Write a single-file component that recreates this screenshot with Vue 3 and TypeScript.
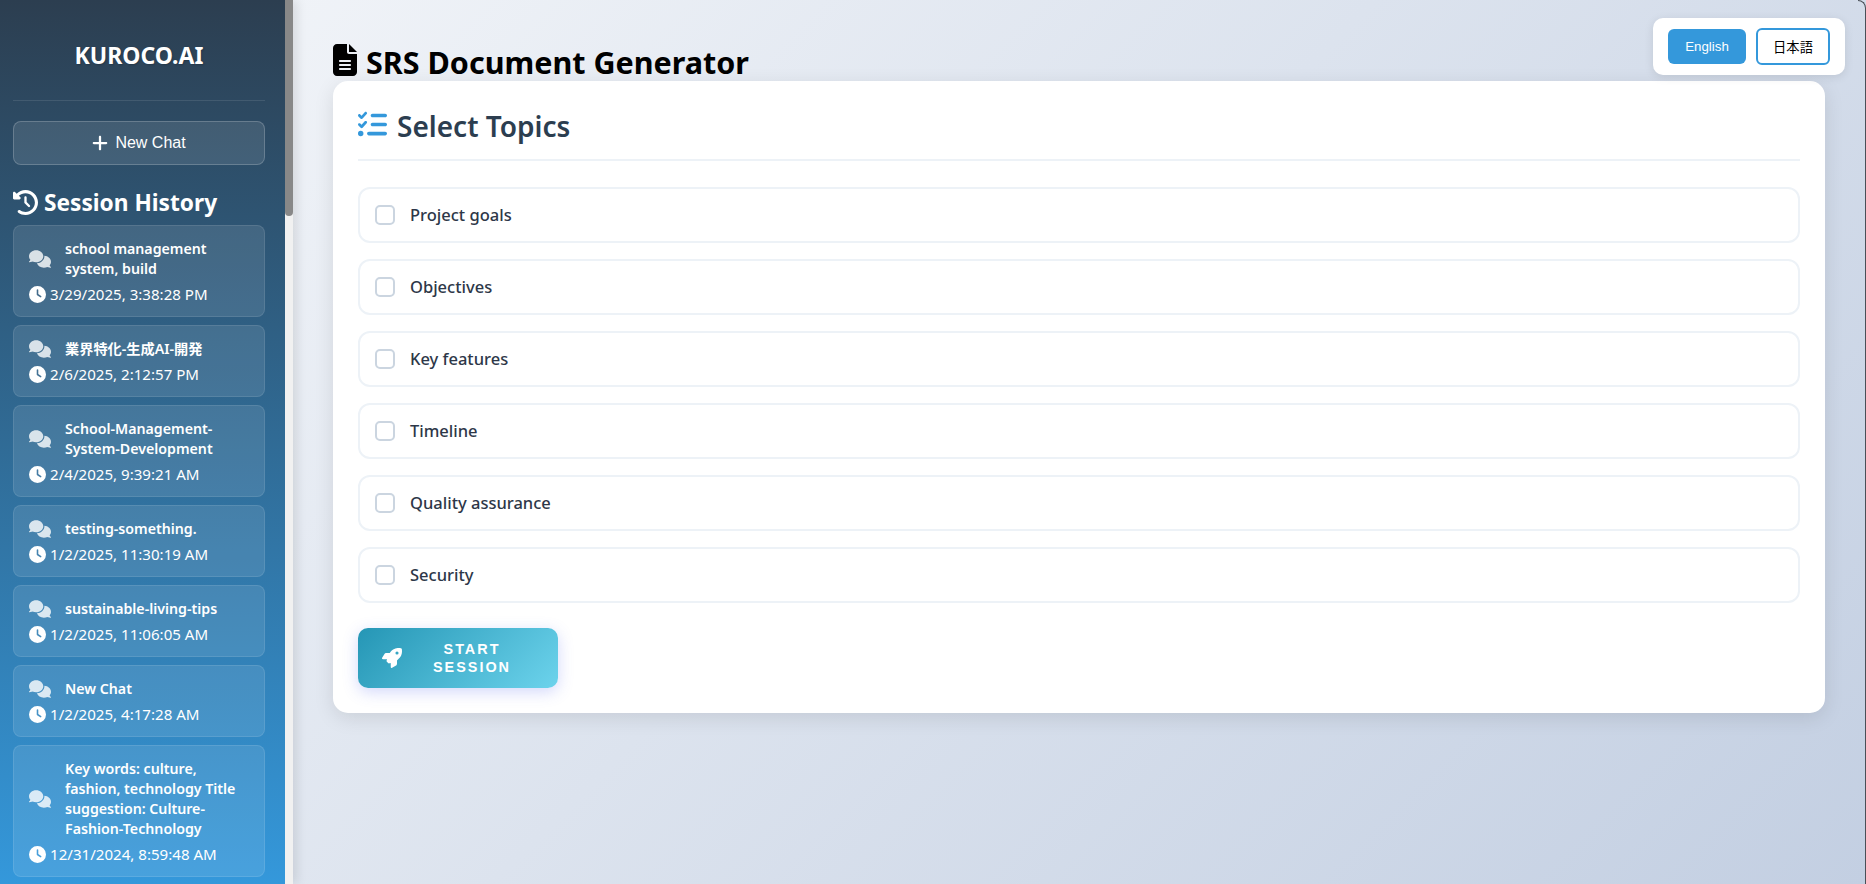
<script setup lang="ts">
interface Session { title: string; date: string }
const sessions: Session[] = [
  { title: 'school management system, build', date: '3/29/2025, 3:38:28 PM' },
  { title: '業界特化-生成AI-開発', date: '2/6/2025, 2:12:57 PM' },
  { title: 'School-Management-System-Development', date: '2/4/2025, 9:39:21 AM' },
  { title: 'testing-something.', date: '1/2/2025, 11:30:19 AM' },
  { title: 'sustainable-living-tips', date: '1/2/2025, 11:06:05 AM' },
  { title: 'New Chat', date: '1/2/2025, 4:17:28 AM' },
  { title: 'Key words: culture, fashion, technology Title suggestion: Culture-Fashion-Technology', date: '12/31/2024, 8:59:48 AM' },
]
const topics = ['Project goals', 'Objectives', 'Key features', 'Timeline', 'Quality assurance', 'Security']
const comments = 'M208 352c114.9 0 208-78.8 208-176S322.9 0 208 0S0 78.8 0 176c0 38.6 14.7 74.3 39.6 103.4c-3.5 9.4-8.7 17.7-14.2 24.7c-4.8 6.2-9.7 11-13.3 14.3c-1.8 1.6-3.3 2.9-4.3 3.7c-.5 .4-.9 .7-1.1 .8l-.2 .2 0 0 0 0C1 327.2-1.4 334.4 .8 340.9S9.1 352 16 352c21.8 0 43.8-5.6 62.1-12.5c9.2-3.5 17.8-7.4 25.3-11.4C134.1 343.3 169.8 352 208 352zM448 176c0 112.3-99.1 196.9-216.5 207C255.8 457.4 336.4 512 432 512c38.2 0 73.9-8.7 104.7-23.9c7.5 4 16 7.9 25.2 11.4c18.3 6.9 40.3 12.5 62.1 12.5c6.9 0 13.1-4.5 15.2-11.1c2.1-6.6-.2-13.8-5.8-17.9l0 0 0 0-.2-.2c-.2-.2-.6-.4-1.1-.8c-1-.8-2.5-2-4.3-3.7c-3.6-3.3-8.5-8.1-13.3-14.3c-5.5-7-10.7-15.4-14.2-24.7c24.9-29 39.6-64.7 39.6-103.4c0-92.8-84.9-168.9-192.6-175.5c.4 5.1 .6 10.3 .6 15.5z'
const clock = 'M256 0a256 256 0 1 1 0 512A256 256 0 1 1 256 0zM232 120V256c0 8 4 15.5 10.7 20l96 64c11 7.4 25.9 4.4 33.3-6.7s4.4-25.9-6.7-33.3L280 243.2V120c0-13.3-10.7-24-24-24s-24 10.7-24 24z'
</script>

<template>
  <div class="app">
    <aside class="sidebar">
      <div class="side-scroll">
        <h1 class="brand">KUROCO.AI</h1>
        <button class="new-chat">
          <svg class="plus" viewBox="0 0 448 512"><path fill="currentColor" d="M256 80c0-17.7-14.3-32-32-32s-32 14.3-32 32V224H48c-17.7 0-32 14.3-32 32s14.3 32 32 32H192V432c0 17.7 14.3 32 32 32s32-14.3 32-32V288H400c17.7 0 32-14.3 32-32s-14.3-32-32-32H256V80z"/></svg>
          New Chat
        </button>
        <h2 class="history">
          <svg class="history-icon" viewBox="0 0 512 512"><path fill="currentColor" d="M75 75L41 41C25.9 25.9 0 36.6 0 57.9V168c0 13.3 10.7 24 24 24H134.1c21.4 0 32.1-25.9 17-41l-30.8-30.8C155 85.5 203 64 256 64c106 0 192 86 192 192s-86 192-192 192c-40.8 0-78.6-12.7-109.7-34.4c-14.5-10.1-34.4-6.6-44.6 7.9s-6.6 34.4 7.9 44.6C151.2 495 201.7 512 256 512c141.4 0 256-114.6 256-256S397.4 0 256 0C185.3 0 121.3 28.7 75 75zm181 53c-13.3 0-24 10.7-24 24V256c0 6.4 2.5 12.5 7 17l72 72c9.4 9.4 24.6 9.4 33.9 0s9.4-24.6 0-33.9l-65-65V152c0-13.3-10.7-24-24-24z"/></svg>
          Session History
        </h2>
        <div class="session-list">
          <div v-for="s in sessions" :key="s.date" class="session">
            <div class="session-top">
              <svg class="comments" viewBox="0 0 640 512"><path fill="currentColor" :d="comments"/></svg>
              <span class="session-title">{{ s.title }}</span>
            </div>
            <div class="session-date">
              <svg class="clock" viewBox="0 0 512 512"><path fill="currentColor" :d="clock"/></svg>
              <span>{{ s.date }}</span>
            </div>
          </div>
        </div>
      </div>
      <div class="track"><div class="thumb"></div></div>
    </aside>

    <main class="main">
      <div class="lang">
        <button class="lang-btn active">English</button>
        <button class="lang-btn outline">日本語</button>
      </div>
      <h1 class="page-title">
        <svg class="doc" viewBox="0 0 384 512"><path fill="currentColor" d="M64 0C28.7 0 0 28.7 0 64V448c0 35.3 28.7 64 64 64H320c35.3 0 64-28.7 64-64V160H256c-17.7 0-32-14.3-32-32V0H64zM256 0V128H384L256 0zM112 256H272c8.8 0 16 7.2 16 16s-7.2 16-16 16H112c-8.8 0-16-7.2-16-16s7.2-16 16-16zm0 64H272c8.8 0 16 7.2 16 16s-7.2 16-16 16H112c-8.8 0-16-7.2-16-16s7.2-16 16-16zm0 64H272c8.8 0 16 7.2 16 16s-7.2 16-16 16H112c-8.8 0-16-7.2-16-16s7.2-16 16-16z"/></svg>
        SRS Document Generator
      </h1>
      <section class="card">
        <h2 class="card-title">
          <svg class="list-icon" viewBox="0 0 512 512"><path fill="currentColor" d="M152.1 38.2c9.9 8.9 10.7 24 1.8 33.9l-72 80c-4.4 4.9-10.6 7.8-17.2 7.9s-12.9-2.4-17.6-7L7 113C-2.3 103.6-2.3 88.4 7 79s24.6-9.4 33.9 0l22.1 22.1 55.1-61.2c8.9-9.9 24-10.7 33.9-1.8zm0 160c9.9 8.9 10.7 24 1.8 33.9l-72 80c-4.4 4.9-10.6 7.8-17.2 7.9s-12.9-2.4-17.6-7L7 273c-9.4-9.4-9.4-24.6 0-33.9s24.6-9.4 33.9 0l22.1 22.1 55.1-61.2c8.9-9.9 24-10.7 33.9-1.8zM224 96c0-17.7 14.3-32 32-32H480c17.7 0 32 14.3 32 32s-14.3 32-32 32H256c-17.7 0-32-14.3-32-32zm0 160c0-17.7 14.3-32 32-32H480c17.7 0 32 14.3 32 32s-14.3 32-32 32H256c-17.7 0-32-14.3-32-32zM160 416c0-17.7 14.3-32 32-32H480c17.7 0 32 14.3 32 32s-14.3 32-32 32H192c-17.7 0-32-14.3-32-32zM48 368a48 48 0 1 1 0 96 48 48 0 1 1 0-96z"/></svg>
          Select Topics
        </h2>
        <div class="topics">
          <label v-for="t in topics" :key="t" class="topic">
            <span class="check"></span>
            <span class="topic-label">{{ t }}</span>
          </label>
        </div>
        <button class="start">
          <svg class="rocket" viewBox="0 0 512 512"><path fill="currentColor" d="M156.6 384.9L125.7 354c-8.5-8.5-11.5-20.8-7.7-32.2c3-8.9 7-20.5 11.8-33.8L24 288c-8.6 0-16.6-4.6-20.9-12.1s-4.2-16.7 .2-24.1l52.5-88.5c13-21.9 36.5-35.3 61.9-35.3l82.3 0c2.4-4 4.8-7.7 7.2-11.3C289.1-4.1 411.1-8.1 483.9 5.3c11.6 2.1 20.6 11.2 22.8 22.8c13.4 72.9 9.3 194.8-111.4 276.7c-3.5 2.4-7.3 4.8-11.3 7.2v82.3c0 25.4-13.4 49-35.3 61.9l-88.5 52.5c-7.4 4.4-16.6 4.5-24.1 .2s-12.1-12.2-12.1-20.9V380.8c-14.1 4.9-26.4 8.9-35.7 11.9c-11.2 3.6-23.4 .5-31.8-7.8zM384 168a40 40 0 1 0 0-80 40 40 0 1 0 0 80z"/></svg>
          <span class="start-text">Start Session</span>
        </button>
      </section>
    </main>
  </div>
</template>

<style>
html, body { margin: 0; height: 100%; overflow: hidden; }
</style>

<style scoped>
.app {
  display: flex;
  height: 884px;
  overflow: hidden;
  font-family: "Noto Sans", "Noto Sans CJK JP", sans-serif;
  background: linear-gradient(135deg, #f5f7fa 0%, #c3cfe2 100%);
}
.sidebar {
  flex: 0 0 293px;
  display: flex;
  height: 884px;
  background: linear-gradient(180deg, #2c3e50 0%, #3498db 100%);
  box-shadow: 4px 0 10px rgba(0, 0, 0, 0.1);
  position: relative;
  z-index: 2;
}
.side-scroll {
  flex: 0 0 285px;
  box-sizing: border-box;
  padding: 0 20px 0 13px;
  overflow: hidden;
  color: #fff;
}
.track { flex: 0 0 8px; background: #f1f1f1; }
.thumb { height: 216px; background: #888; border-radius: 0 0 4px 4px; }
.brand {
  margin: 0;
  padding: 41px 0 30px;
  height: 29px;
  line-height: 29px;
  text-align: center;
  font-size: 23px;
  font-weight: 700;
  border-bottom: 1px solid rgba(255, 255, 255, 0.1);
  text-shadow: 1px 1px 2px rgba(0, 0, 0, 0.2);
}
.new-chat {
  margin-top: 20px;
  width: 100%;
  height: 44px;
  display: flex;
  align-items: center;
  justify-content: center;
  gap: 7px;
  color: #fff;
  font-family: "Liberation Sans", sans-serif;
  font-size: 16px;
  background: rgba(255, 255, 255, 0.1);
  border: 1px solid rgba(255, 255, 255, 0.2);
  border-radius: 8px;
}
.plus { width: 16px; height: 18px; }
.history {
  box-sizing: border-box;
  margin: 20px 0 0;
  height: 40px;
  padding-bottom: 5px;
  display: flex;
  align-items: center;
  gap: 6px;
  font-size: 22.7px;
  font-weight: 700;
  line-height: 35px;
}
.history-icon { width: 25px; height: 25px; flex: none; }
.session-list { display: flex; flex-direction: column; gap: 8px; }
.session {
  box-sizing: border-box;
  padding: 13px 15px 12px;
  background: rgba(255, 255, 255, 0.1);
  border: 1px solid rgba(255, 255, 255, 0.1);
  border-radius: 8px;
}
.session-top { display: flex; align-items: center; }
.comments { flex: none; width: 22px; height: 18px; margin-right: 14px; opacity: 0.8; }
.session-title { font-size: 14.2px; font-weight: 600; line-height: 20px; }
.session-date {
  display: flex;
  align-items: center;
  gap: 4px;
  margin-top: 5px;
  font-size: 15.1px;
  line-height: 20px;
}
.clock { width: 17px; height: 17px; flex: none; }
.main {
  flex: 1;
  min-width: 0;
  position: relative;
  box-sizing: border-box;
  padding: 43px 41px 0 40px;
}
.main::after {
  content: "";
  position: absolute;
  top: 0;
  right: 0;
  width: 8px;
  height: 100%;
  box-sizing: border-box;
  border-top: 1px solid #4a4f57;
  border-right: 1px solid #4a4f57;
  border-top-right-radius: 8px;
  pointer-events: none;
}
.lang {
  position: absolute;
  top: 18px;
  right: 21px;
  display: flex;
  align-items: center;
  gap: 10px;
  padding: 10px 15px;
  background: #fff;
  border-radius: 10px;
  box-shadow: 0 2px 10px rgba(0, 0, 0, 0.1);
}
.lang-btn {
  box-sizing: border-box;
  height: 36px;
  border-radius: 6px;
  font-family: "Liberation Sans", "Noto Sans CJK JP", sans-serif;
  font-size: 13.3px;
}
.active { width: 78px; height: 35px; background: #3498db; color: #fff; border: none; }
.outline { width: 74px; height: 37px; background: #fff; color: #000; border: 2px solid #3498db; }
.page-title {
  margin: 0;
  height: 38px;
  display: flex;
  align-items: center;
  gap: 9px;
  color: #000;
  font-size: 30.5px;
  font-weight: 700;
  line-height: 36px;
  white-space: nowrap;
}
.doc { width: 24px; height: 32px; flex: none; margin-top: -4px; }
.card {
  background: #fff;
  border-radius: 15px;
  padding: 25px;
  box-shadow: 0 5px 20px rgba(0, 0, 0, 0.1);
}
.card-title {
  box-sizing: border-box;
  margin: 0;
  height: 55px;
  padding-bottom: 13px;
  display: flex;
  align-items: center;
  gap: 10px;
  color: #2c3e50;
  font-size: 28px;
  font-weight: 600;
  border-bottom: 2px solid #edf2f7;
}
.list-icon { width: 29px; height: 29px; color: #3498db; flex: none; margin-top: -3px; }
.topics { display: flex; flex-direction: column; gap: 16px; margin-top: 25.5px; }
.topic {
  box-sizing: border-box;
  height: 56px;
  display: flex;
  align-items: center;
  padding: 0 15px;
  border: 2px solid #edf2f7;
  border-radius: 12px;
}
.check {
  box-sizing: border-box;
  width: 20px;
  height: 20px;
  border: 2px solid #cbd5e0;
  border-radius: 5px;
}
.topic-label { margin-left: 15px; color: #2d3748; font-size: 16.5px; font-weight: 500; }
.start {
  margin-top: 25.5px;
  width: 200px;
  height: 60px;
  display: flex;
  align-items: center;
  padding: 0 24px;
  border: none;
  border-radius: 10px;
  color: #fff;
  background: linear-gradient(135deg, #2596b5 0%, #6cd3ec 100%);
  box-shadow: 0 4px 15px rgba(80, 100, 240, 0.25);
}
.rocket { width: 20px; height: 20px; flex: none; }
.start-text {
  flex: 1;
  font-family: "Liberation Sans", sans-serif;
  font-size: 14.4px;
  font-weight: 700;
  line-height: 18px;
  letter-spacing: 2px;
  text-transform: uppercase;
  text-align: center;
  padding: 0 0 0 8px;
}
</style>
